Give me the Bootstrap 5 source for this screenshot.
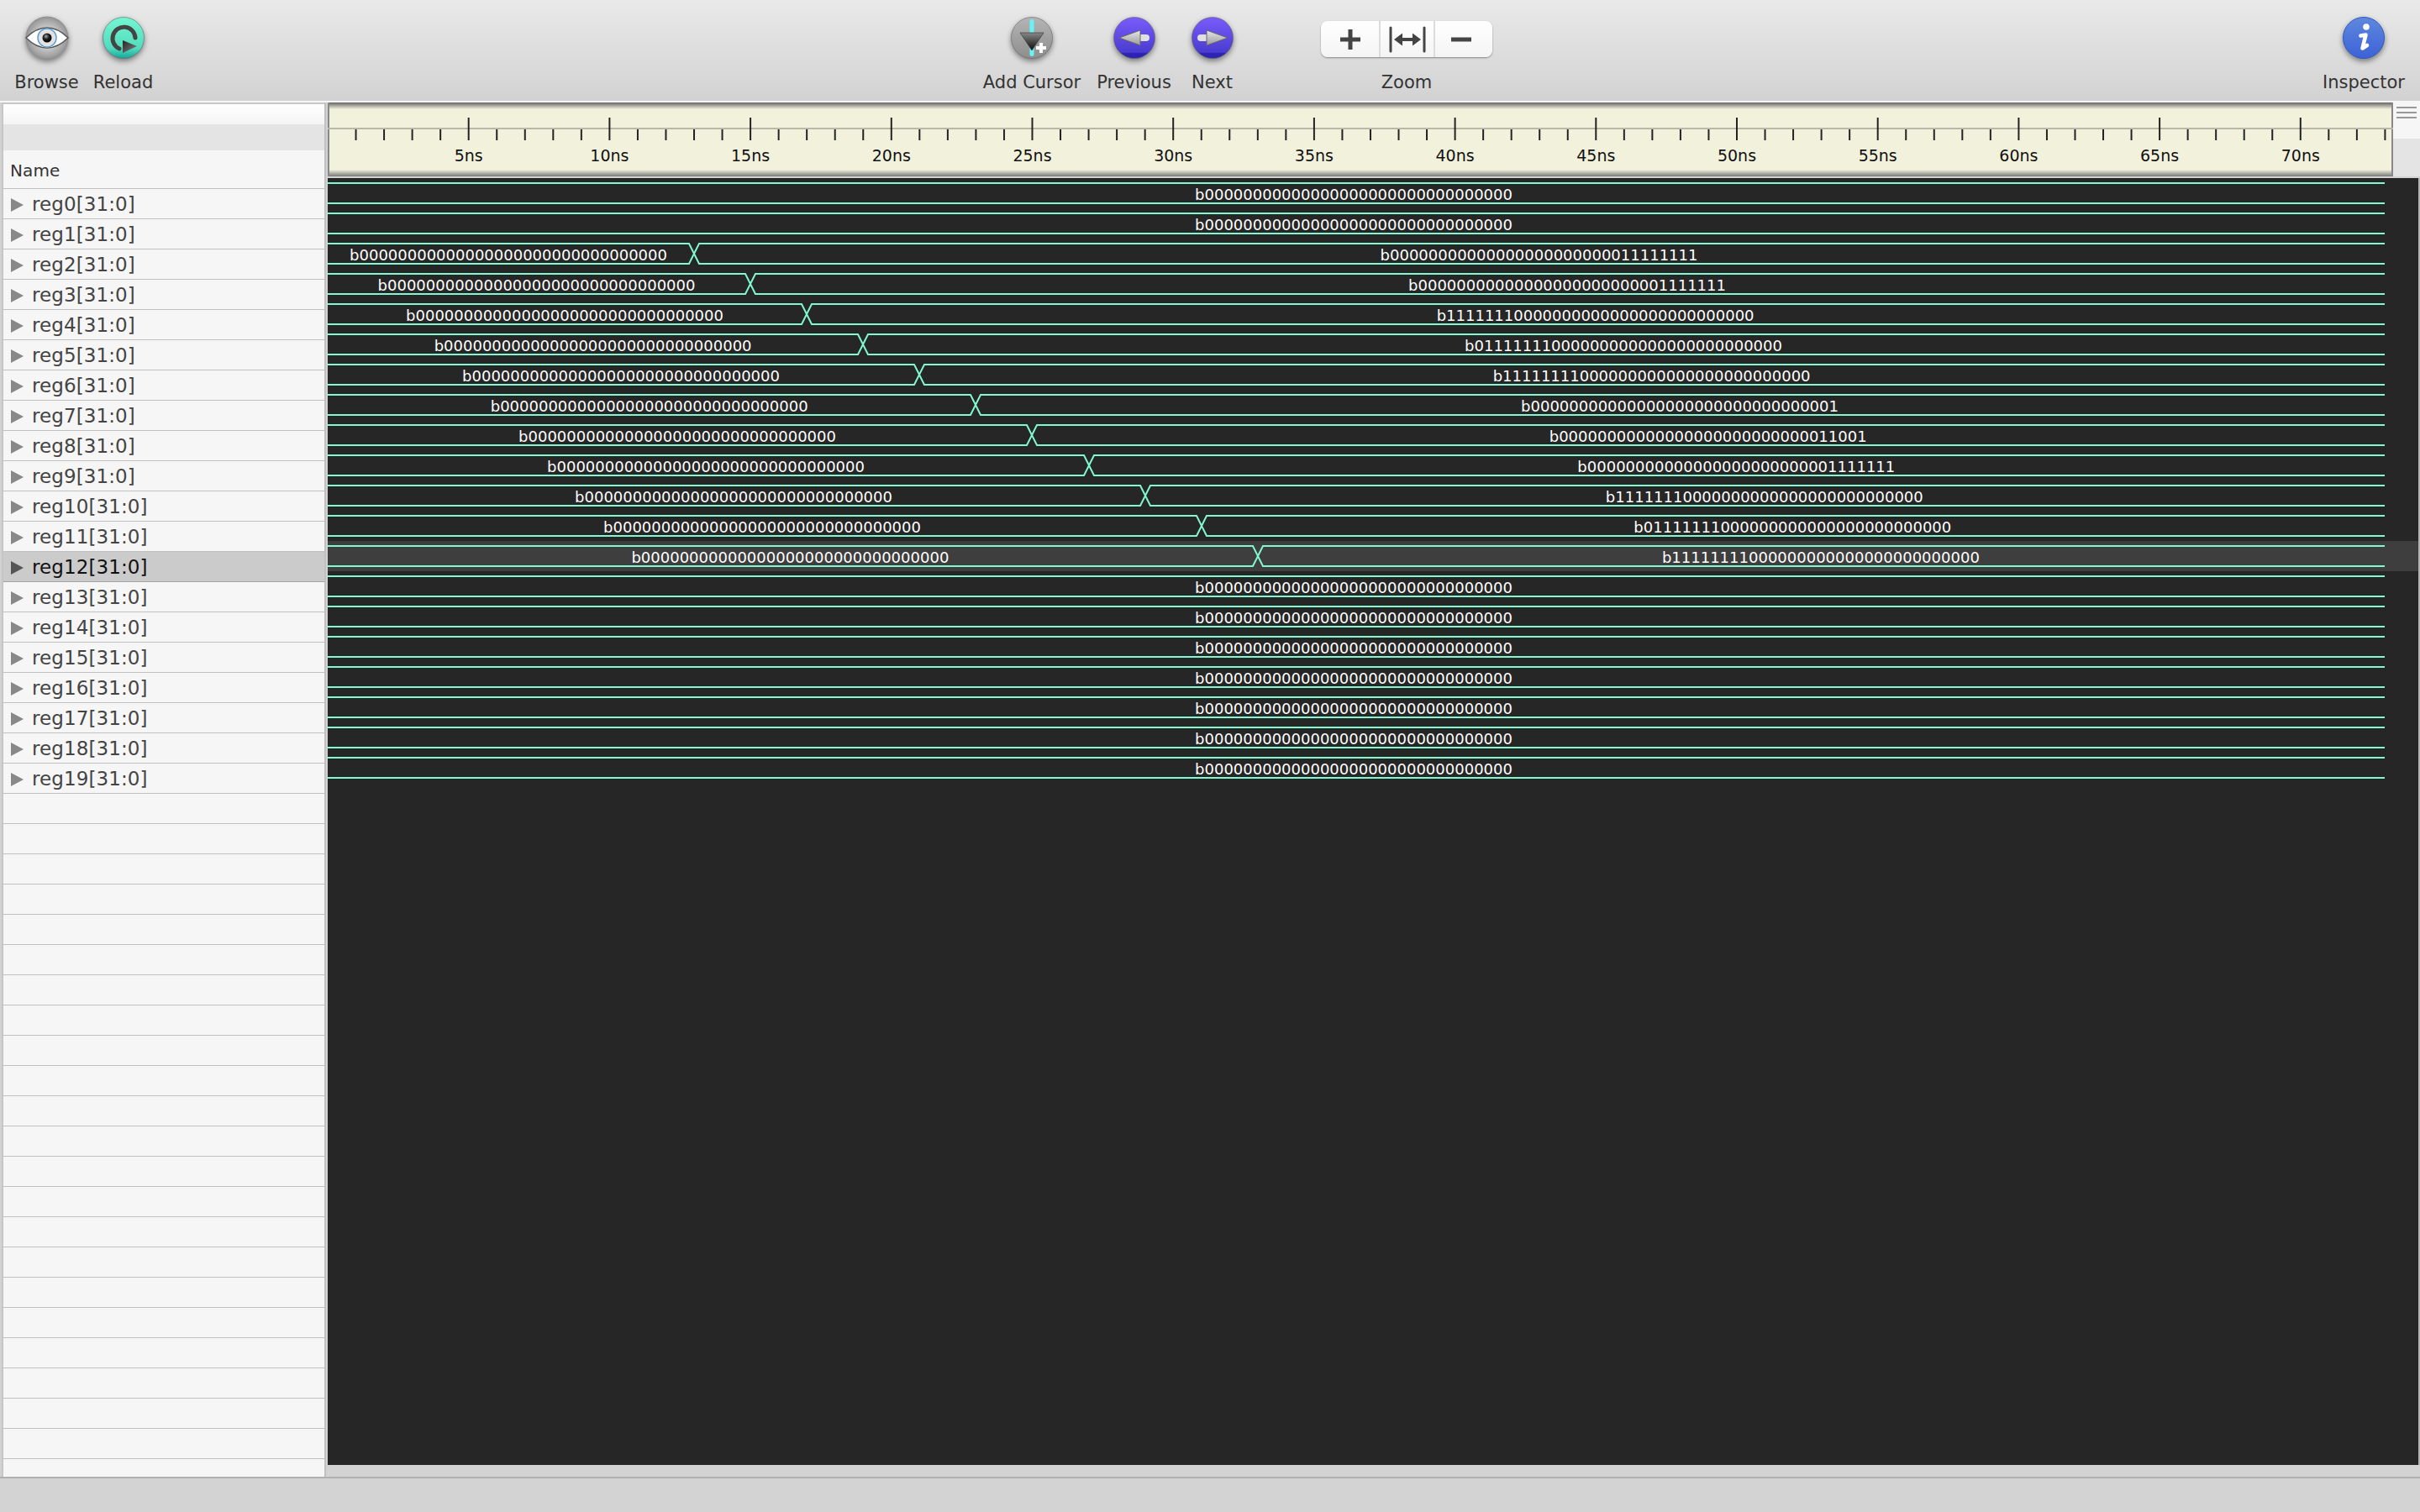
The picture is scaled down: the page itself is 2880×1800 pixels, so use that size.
<!doctype html>
<html lang="en"><head><meta charset="utf-8"><title>Waveform viewer</title>
<link href="https://cdn.jsdelivr.net/npm/bootstrap@5.3.0/dist/css/bootstrap.min.css" rel="stylesheet">
<style>
html,body{background:#d3d3d3;font-family:"DejaVu Sans",sans-serif;}
.shell{width:2880px;height:1800px;}
.toolbar{height:120px;background:linear-gradient(#e9e9e9,#d2d2d2);padding-left:10px;flex:none;}
.tool{padding-top:15px;color:#333;font-size:21px;line-height:24px;}
.tool svg{display:block;filter:drop-shadow(0 3px 3px rgba(0,0,0,.45));}
.tool-label{margin-top:11px;white-space:nowrap;}
.w-browse,.w-reload{width:91px;}
.grp-center{margin-left:974px;}
.w-add{width:124px;}.w-prev{width:119px;}.w-next{width:67px;}
.w-zoom{width:204px;margin-left:96px;}
.w-insp{width:134px;margin-left:auto;}
.zoomgrp{height:43px;margin-top:10px;margin-bottom:7px;width:204px;border-radius:8px;box-shadow:0 1px 2px rgba(0,0,0,.4);background:linear-gradient(#fff,#f4f4f4);}
.zoomgrp .btn{padding:0;border:0;border-radius:0;background:transparent;display:flex;align-items:center;justify-content:center;height:43px;}
.zoomgrp svg{filter:none;}
.zoomgrp .btn + .btn{border-left:2px solid #dcdcdc;margin-left:0;}
.zb1{width:70px;flex:none!important;}.zb2{width:66px;flex:none!important;}.zb3{width:68px;flex:none!important;padding-right:4px!important;}
.panes{height:1638px;border-top:2px solid #f6f6f6;flex:none;}
.side{width:390px;flex:none;background:#d2d2d2;padding:0 2px;}
.side-in{height:100%;border-left:2px solid #c6c6c6;border-right:2px solid #c0c0c0;}
.side-filter{height:26px;border-top:2px solid #c8c8c8;background:linear-gradient(#fff,#f4f4f4);}
.side-gap{height:32px;background:#e4e4e4;}
.reglist{border-radius:0;background:#f6f6f6;}
.regrow{height:36px;flex:none;padding:2px 0 0 9px;border:0;border-bottom:2px solid #c0c0c0;border-radius:0;background:#f6f6f6;color:#444;font-size:23px;letter-spacing:.1px;display:flex;align-items:center;line-height:1;}
.regrow:first-child{border-top:0;}
.regrow svg{width:15px;height:18px;margin-right:10px;flex:none;fill:#888;}
.reghead{height:46px;border-top:2px solid #c0c0c0;font-size:20px;padding-left:8px;color:#333;}
.regrow.sel{background:#cbcbcb;color:#111;border-bottom-color:#a2a2a2;}
.regrow.sel svg{fill:#555;}
.rightp{min-width:0;}
.rulerbar{height:88px;flex:none;}
.ruler{width:2458px;flex:none;border-left:2px solid #888;border-right:2px solid #888;
 background:linear-gradient(#666,#f1f1dc 8px,#f1f1dc 80px,#777);}
.ruler svg{display:block;margin-left:-2px;}
.corner{background:#e4e4e4;}
.corner-top{height:43px;background:#f6f6f6;padding:5px 4px 0 4px;}
.corner-top i{display:block;height:2px;background:#999;margin-bottom:4px;}
.wave{height:1532px;margin-top:2px;border-right:2px solid #b4b4b4;background:#262626;flex:none;}
.wave svg{display:block;}
.wave text{font-family:"DejaVu Sans",sans-serif;font-size:18px;fill:#fff;text-anchor:middle;}
.wave path{fill:none;stroke:#80f8d0;stroke-width:2;}
.rtext{font-family:"DejaVu Sans",sans-serif;font-size:19px;fill:#111;text-anchor:middle;}
.statusbar{height:42px;flex:none;border-top:2px solid #b0b0b0;background:#d3d3d3;}
</style></head><body class="overflow-hidden m-0">
<div class="shell d-flex flex-column overflow-hidden">
<header class="toolbar d-flex align-items-start">
 <div class="tool w-browse text-center d-flex flex-column align-items-center">
  <svg width="60" height="60" viewBox="0 0 60 60"><defs><radialGradient id="g1" cx=".5" cy=".5" r=".55"><stop offset=".3" stop-color="#d8d8d8"/><stop offset=".8" stop-color="#a0a0a0"/><stop offset="1" stop-color="#808080"/></radialGradient><radialGradient id="g1p" cx=".4" cy=".35" r=".6"><stop offset="0" stop-color="#aaa"/><stop offset=".5" stop-color="#222"/><stop offset="1" stop-color="#000"/></radialGradient></defs><circle cx="30" cy="30" r="25.5" fill="url(#g1)"/><path d="M5 30C14 21 22 18 30 18S46 21 55 30C46 39 38 42 30 42S14 39 5 30Z" fill="#fff" stroke="#555" stroke-width="1.5"/><circle cx="30" cy="30" r="11" fill="#e2e2e2" stroke="#5f9fd0" stroke-width="1.5"/><circle cx="30" cy="30" r="5.5" fill="url(#g1p)"/></svg>
  <div class="tool-label">Browse</div></div>
 <div class="tool w-reload text-center d-flex flex-column align-items-center">
  <svg width="60" height="60" viewBox="0 0 60 60"><defs><linearGradient id="g2" x1="0" y1="0" x2="0" y2="1"><stop offset="0" stop-color="#74f6d2"/><stop offset=".75" stop-color="#52dcbd"/><stop offset="1" stop-color="#14a79c"/></linearGradient><linearGradient id="g2t" x1="0" y1="0" x2="1" y2="1"><stop offset="0" stop-color="#222"/><stop offset="1" stop-color="#888"/></linearGradient></defs><circle cx="30" cy="30" r="24.5" fill="url(#g2)" stroke="#666" stroke-width=".6"/><path d="M44 30A13.5 13.5 0 1 0 25 43" fill="none" stroke="#444" stroke-width="5" stroke-linecap="round"/><path d="M29 33V48L46 40Z" fill="url(#g2t)"/></svg>
  <div class="tool-label">Reload</div></div>
 <div class="grp-center d-flex align-items-start">
 <div class="tool w-add text-center d-flex flex-column align-items-center">
  <svg width="60" height="60" viewBox="0 0 60 60"><defs><linearGradient id="g3" x1="0" y1="0" x2="0" y2="1"><stop offset="0" stop-color="#b4b4b4"/><stop offset="1" stop-color="#8e8e8e"/></linearGradient><linearGradient id="g3t" x1="0" y1="0" x2="0" y2="1"><stop offset="0" stop-color="#888"/><stop offset="1" stop-color="#0a0a0a"/></linearGradient></defs><circle cx="30" cy="30" r="24.5" fill="url(#g3)" stroke="#666" stroke-width=".6"/><rect x="27.5" y="8" width="5" height="44" rx="2.5" fill="#66f4f6"/><path d="M16 24H44L30 45Z" fill="url(#g3t)" stroke="#444" stroke-width=".8"/><path d="M41 36V48M35 42H47" stroke="#fff" stroke-width="4"/></svg>
  <div class="tool-label">Add Cursor</div></div>
 <div class="tool w-prev text-center d-flex flex-column align-items-center">
  <svg width="60" height="60" viewBox="0 0 60 60"><defs><linearGradient id="g4" x1="0" y1="0" x2="0" y2="1"><stop offset="0" stop-color="#7a5cfb"/><stop offset=".85" stop-color="#4a3cd0"/><stop offset=".88" stop-color="#2c22b4"/><stop offset="1" stop-color="#2c22b4"/></linearGradient><linearGradient id="g4a" x1="0" y1="0" x2="0" y2="1"><stop offset="0" stop-color="#e8e8e8"/><stop offset="1" stop-color="#9a9a9a"/></linearGradient></defs><circle cx="30" cy="30" r="24.5" fill="url(#g4)" stroke="#666" stroke-width=".6"/><rect x="34" y="26" width="14" height="8" rx="4" fill="#e0e0e0"/><path d="M12 30 37 21V39Z" fill="url(#g4a)" stroke="#666" stroke-width="1"/></svg>
  <div class="tool-label">Previous</div></div>
 <div class="tool w-next text-center d-flex flex-column align-items-center">
  <svg width="60" height="60" viewBox="0 0 60 60"><circle cx="30" cy="30" r="24.5" fill="url(#g4)" stroke="#666" stroke-width=".6"/><rect x="12" y="26" width="14" height="8" rx="4" fill="#e0e0e0"/><path d="M48 30 23 21V39Z" fill="url(#g4a)" stroke="#666" stroke-width="1"/></svg>
  <div class="tool-label">Next</div></div>
 <div class="tool w-zoom text-center">
  <div class="btn-group zoomgrp" role="group">
   <button type="button" class="btn zb1" aria-label="Zoom in"><svg width="30" height="30" viewBox="0 0 30 30"><path d="M15 3V27M3 15H27" stroke="#444" stroke-width="5"/></svg></button>
   <button type="button" class="btn zb2" aria-label="Fit"><svg width="46" height="34" viewBox="0 0 46 34"><path d="M3 3V31M43 3V31" stroke="#444" stroke-width="3" stroke-linecap="round"/><path d="M7 17 17 9.5V15H29V9.5L39 17 29 24.5V19H17V24.5Z" fill="#444"/></svg></button>
   <button type="button" class="btn zb3" aria-label="Zoom out"><svg width="30" height="30" viewBox="0 0 30 30"><path d="M3 15H27" stroke="#444" stroke-width="5"/></svg></button>
  </div>
  <div class="tool-label">Zoom</div></div>
 </div>
 <div class="tool w-insp text-center d-flex flex-column align-items-center">
  <svg width="60" height="60" viewBox="0 0 60 60"><defs><linearGradient id="g5" x1="0" y1="0" x2="0" y2="1"><stop offset="0" stop-color="#5f88de"/><stop offset="1" stop-color="#3c62d6"/></linearGradient></defs><circle cx="30" cy="30" r="24.5" fill="url(#g5)" stroke="#3458c0" stroke-width="1"/><circle cx="33" cy="17" r="3.8" fill="#fff"/><path d="M26.5 27.5 32.5 26.5 28.5 42.5 34 39" fill="none" stroke="#fff" stroke-width="4.6" stroke-linejoin="round" stroke-linecap="round"/></svg>
  <div class="tool-label">Inspector</div></div>
</header>
<main class="panes d-flex">
 <aside class="side">
  <div class="side-in d-flex flex-column overflow-hidden">
   <div class="side-filter"></div>
   <div class="side-gap"></div>
   <ul class="list-group list-group-flush reglist flex-grow-1 overflow-hidden">
    <li class="list-group-item regrow reghead">Name</li>
    <li class="list-group-item regrow"><svg viewBox="0 0 15 18"><path d="M0 1 15 9 0 17Z"/></svg>reg0[31:0]</li>
    <li class="list-group-item regrow"><svg viewBox="0 0 15 18"><path d="M0 1 15 9 0 17Z"/></svg>reg1[31:0]</li>
    <li class="list-group-item regrow"><svg viewBox="0 0 15 18"><path d="M0 1 15 9 0 17Z"/></svg>reg2[31:0]</li>
    <li class="list-group-item regrow"><svg viewBox="0 0 15 18"><path d="M0 1 15 9 0 17Z"/></svg>reg3[31:0]</li>
    <li class="list-group-item regrow"><svg viewBox="0 0 15 18"><path d="M0 1 15 9 0 17Z"/></svg>reg4[31:0]</li>
    <li class="list-group-item regrow"><svg viewBox="0 0 15 18"><path d="M0 1 15 9 0 17Z"/></svg>reg5[31:0]</li>
    <li class="list-group-item regrow"><svg viewBox="0 0 15 18"><path d="M0 1 15 9 0 17Z"/></svg>reg6[31:0]</li>
    <li class="list-group-item regrow"><svg viewBox="0 0 15 18"><path d="M0 1 15 9 0 17Z"/></svg>reg7[31:0]</li>
    <li class="list-group-item regrow"><svg viewBox="0 0 15 18"><path d="M0 1 15 9 0 17Z"/></svg>reg8[31:0]</li>
    <li class="list-group-item regrow"><svg viewBox="0 0 15 18"><path d="M0 1 15 9 0 17Z"/></svg>reg9[31:0]</li>
    <li class="list-group-item regrow"><svg viewBox="0 0 15 18"><path d="M0 1 15 9 0 17Z"/></svg>reg10[31:0]</li>
    <li class="list-group-item regrow"><svg viewBox="0 0 15 18"><path d="M0 1 15 9 0 17Z"/></svg>reg11[31:0]</li>
    <li class="list-group-item regrow sel"><svg viewBox="0 0 15 18"><path d="M0 1 15 9 0 17Z"/></svg>reg12[31:0]</li>
    <li class="list-group-item regrow"><svg viewBox="0 0 15 18"><path d="M0 1 15 9 0 17Z"/></svg>reg13[31:0]</li>
    <li class="list-group-item regrow"><svg viewBox="0 0 15 18"><path d="M0 1 15 9 0 17Z"/></svg>reg14[31:0]</li>
    <li class="list-group-item regrow"><svg viewBox="0 0 15 18"><path d="M0 1 15 9 0 17Z"/></svg>reg15[31:0]</li>
    <li class="list-group-item regrow"><svg viewBox="0 0 15 18"><path d="M0 1 15 9 0 17Z"/></svg>reg16[31:0]</li>
    <li class="list-group-item regrow"><svg viewBox="0 0 15 18"><path d="M0 1 15 9 0 17Z"/></svg>reg17[31:0]</li>
    <li class="list-group-item regrow"><svg viewBox="0 0 15 18"><path d="M0 1 15 9 0 17Z"/></svg>reg18[31:0]</li>
    <li class="list-group-item regrow"><svg viewBox="0 0 15 18"><path d="M0 1 15 9 0 17Z"/></svg>reg19[31:0]</li>
    <li class="list-group-item regrow"></li><li class="list-group-item regrow"></li><li class="list-group-item regrow"></li><li class="list-group-item regrow"></li>
    <li class="list-group-item regrow"></li><li class="list-group-item regrow"></li><li class="list-group-item regrow"></li><li class="list-group-item regrow"></li>
    <li class="list-group-item regrow"></li><li class="list-group-item regrow"></li><li class="list-group-item regrow"></li><li class="list-group-item regrow"></li>
    <li class="list-group-item regrow"></li><li class="list-group-item regrow"></li><li class="list-group-item regrow"></li><li class="list-group-item regrow"></li>
    <li class="list-group-item regrow"></li><li class="list-group-item regrow"></li><li class="list-group-item regrow"></li><li class="list-group-item regrow"></li>
    <li class="list-group-item regrow"></li><li class="list-group-item regrow"></li><li class="list-group-item regrow"></li>
   </ul>
  </div>
 </aside>
 <section class="rightp flex-grow-1 d-flex flex-column">
  <div class="rulerbar d-flex">
   <div class="ruler">
    <svg width="2458" height="88" viewBox="0 0 2458 88"><defs>
     <pattern id="minor" x="-1" y="0" width="33.54" height="88" patternUnits="userSpaceOnUse"><rect x="0" y="32" width="2" height="13" fill="#222"/></pattern>
     <pattern id="major" x="-1" y="0" width="167.7" height="88" patternUnits="userSpaceOnUse"><rect x="0" y="18" width="2" height="14" fill="#222"/></pattern></defs>
     <rect x="0" y="30" width="2458" height="2" fill="#b8b8aa"/>
     <rect x="20" y="0" width="2438" height="88" fill="url(#minor)"/>
     <rect x="20" y="0" width="2438" height="88" fill="url(#major)"/>
     <g class="rlabels">
     <text class="rtext" x="167.7" y="70">5ns</text><text class="rtext" x="335.4" y="70">10ns</text><text class="rtext" x="503.1" y="70">15ns</text><text class="rtext" x="670.8" y="70">20ns</text><text class="rtext" x="838.5" y="70">25ns</text><text class="rtext" x="1006.2" y="70">30ns</text><text class="rtext" x="1173.9" y="70">35ns</text><text class="rtext" x="1341.6" y="70">40ns</text><text class="rtext" x="1509.3" y="70">45ns</text><text class="rtext" x="1677" y="70">50ns</text><text class="rtext" x="1844.7" y="70">55ns</text><text class="rtext" x="2012.4" y="70">60ns</text><text class="rtext" x="2180.1" y="70">65ns</text><text class="rtext" x="2347.8" y="70">70ns</text>
     </g></svg>
   </div>
   <div class="corner flex-grow-1"><div class="corner-top"><i></i><i></i><i></i></div></div>
  </div>
  <div class="wave">
   <svg width="2488" height="1532" viewBox="0 0 2488 1532">
    <rect x="0" y="432" width="2488" height="36" fill="#3e3e3e"/>
    <g><path d="M0 6H2448M0 30H2448"/><text x="1221" y="26">b00000000000000000000000000000000</text></g>
    <g transform="translate(0 36)"><path d="M0 6H2448M0 30H2448"/><text x="1221" y="26">b00000000000000000000000000000000</text></g>
    <g transform="translate(0 72)"><path d="M0 6H430L442 30H2448M0 30H430L442 6H2448"/><text x="215" y="26">b00000000000000000000000000000000</text><text x="1441.5" y="26">b00000000000000000000000011111111</text></g>
    <g transform="translate(0 108)"><path d="M0 6H497L509 30H2448M0 30H497L509 6H2448"/><text x="248.5" y="26">b00000000000000000000000000000000</text><text x="1475" y="26">b00000000000000000000000001111111</text></g>
    <g transform="translate(0 144)"><path d="M0 6H564L576 30H2448M0 30H564L576 6H2448"/><text x="282" y="26">b00000000000000000000000000000000</text><text x="1508.6" y="26">b11111110000000000000000000000000</text></g>
    <g transform="translate(0 180)"><path d="M0 6H631L643 30H2448M0 30H631L643 6H2448"/><text x="315.6" y="26">b00000000000000000000000000000000</text><text x="1542" y="26">b01111111000000000000000000000000</text></g>
    <g transform="translate(0 216)"><path d="M0 6H698L710 30H2448M0 30H698L710 6H2448"/><text x="349" y="26">b00000000000000000000000000000000</text><text x="1575.6" y="26">b11111111000000000000000000000000</text></g>
    <g transform="translate(0 252)"><path d="M0 6H765L777 30H2448M0 30H765L777 6H2448"/><text x="382.7" y="26">b00000000000000000000000000000000</text><text x="1609" y="26">b00000000000000000000000000000001</text></g>
    <g transform="translate(0 288)"><path d="M0 6H832L844 30H2448M0 30H832L844 6H2448"/><text x="416" y="26">b00000000000000000000000000000000</text><text x="1642.7" y="26">b00000000000000000000000000011001</text></g>
    <g transform="translate(0 324)"><path d="M0 6H900L912 30H2448M0 30H900L912 6H2448"/><text x="450" y="26">b00000000000000000000000000000000</text><text x="1676.3" y="26">b00000000000000000000000001111111</text></g>
    <g transform="translate(0 360)"><path d="M0 6H967L979 30H2448M0 30H967L979 6H2448"/><text x="483" y="26">b00000000000000000000000000000000</text><text x="1709.8" y="26">b11111110000000000000000000000000</text></g>
    <g transform="translate(0 396)"><path d="M0 6H1034L1046 30H2448M0 30H1034L1046 6H2448"/><text x="517" y="26">b00000000000000000000000000000000</text><text x="1743.3" y="26">b01111111000000000000000000000000</text></g>
    <g transform="translate(0 432)"><path d="M0 6H1101L1113 30H2448M0 30H1101L1113 6H2448"/><text x="550.4" y="26">b00000000000000000000000000000000</text><text x="1776.9" y="26">b11111111000000000000000000000000</text></g>
    <g transform="translate(0 468)"><path d="M0 6H2448M0 30H2448"/><text x="1221" y="26">b00000000000000000000000000000000</text></g>
    <g transform="translate(0 504)"><path d="M0 6H2448M0 30H2448"/><text x="1221" y="26">b00000000000000000000000000000000</text></g>
    <g transform="translate(0 540)"><path d="M0 6H2448M0 30H2448"/><text x="1221" y="26">b00000000000000000000000000000000</text></g>
    <g transform="translate(0 576)"><path d="M0 6H2448M0 30H2448"/><text x="1221" y="26">b00000000000000000000000000000000</text></g>
    <g transform="translate(0 612)"><path d="M0 6H2448M0 30H2448"/><text x="1221" y="26">b00000000000000000000000000000000</text></g>
    <g transform="translate(0 648)"><path d="M0 6H2448M0 30H2448"/><text x="1221" y="26">b00000000000000000000000000000000</text></g>
    <g transform="translate(0 684)"><path d="M0 6H2448M0 30H2448"/><text x="1221" y="26">b00000000000000000000000000000000</text></g>
   </svg>
  </div>
 </section>
</main>
<footer class="statusbar"></footer>
</div>
<script src="https://cdn.jsdelivr.net/npm/bootstrap@5.3.0/dist/js/bootstrap.bundle.min.js"></script>
</body></html>
